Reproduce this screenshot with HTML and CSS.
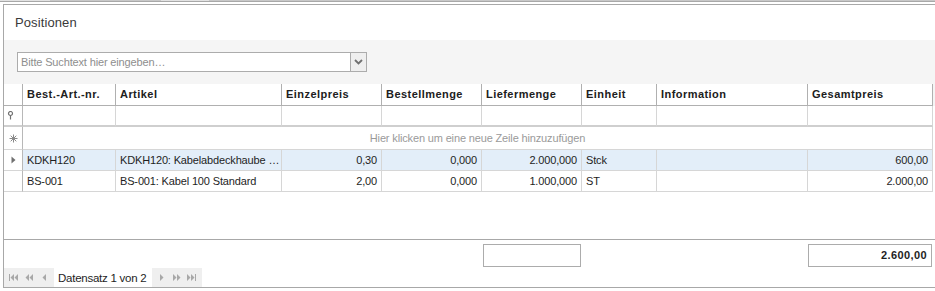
FILE: index.html
```html
<!DOCTYPE html>
<html lang="de">
<head>
    <meta charset="UTF-8">
    <title>Positionen</title>
    <link rel="stylesheet" href="styles.css">
</head>
<body>

<!-- Reste der Tab-Leiste -->
<div class="tabs">
    <span class="tab tab-a"></span>
    <span class="tab tab-b"></span>
</div>

<section class="panel">
    <div class="panel-title">Positionen</div>

    <div class="search-bar">
        <div class="combo">
            <span class="placeholder">Bitte Suchtext hier eingeben…</span>
            <span class="combo-btn">
                <svg width="9" height="6" viewBox="0 0 9 6"><path d="M1 1 L4.5 4.5 L8 1" fill="none" stroke="#707070" stroke-width="1.8"/></svg>
            </span>
        </div>
    </div>

    <div class="grid">
        <div class="row head">
            <div class="cell ind"></div>
            <div class="cell">Best.-Art.-nr.</div>
            <div class="cell">Artikel</div>
            <div class="cell">Einzelpreis</div>
            <div class="cell">Bestellmenge</div>
            <div class="cell">Liefermenge</div>
            <div class="cell">Einheit</div>
            <div class="cell">Information</div>
            <div class="cell">Gesamtpreis</div>
        </div>

        <div class="row filter">
            <div class="cell ind">
                <svg width="7" height="9" viewBox="0 0 7 9"><circle cx="3.5" cy="2.5" r="2" fill="none" stroke="#707070" stroke-width="1.2"/><path d="M3.5 4.5 V8.5" stroke="#707070" stroke-width="1.2"/></svg>
            </div>
            <div class="cell"></div>
            <div class="cell"></div>
            <div class="cell"></div>
            <div class="cell"></div>
            <div class="cell"></div>
            <div class="cell"></div>
            <div class="cell"></div>
            <div class="cell"></div>
        </div>

        <div class="row new-row">
            <div class="cell ind">
                <svg width="9" height="9" viewBox="0 0 9 9"><path d="M4.5 0.5 V8.5 M0.5 4.5 H8.5 M1.7 1.7 L7.3 7.3 M7.3 1.7 L1.7 7.3" stroke="#8a8a8a" stroke-width="1"/></svg>
            </div>
            <div class="cell hint">Hier klicken um eine neue Zeile hinzuzufügen</div>
        </div>

        <div class="row data selected">
            <div class="cell ind">
                <svg width="5" height="8" viewBox="0 0 5 8"><path d="M0.5 0.5 L4.5 4 L0.5 7.5 Z" fill="#707070"/></svg>
            </div>
            <div class="cell">KDKH120</div>
            <div class="cell">KDKH120: Kabelabdeckhaube …</div>
            <div class="cell num">0,30</div>
            <div class="cell num">0,000</div>
            <div class="cell num">2.000,000</div>
            <div class="cell">Stck</div>
            <div class="cell"></div>
            <div class="cell num">600,00</div>
        </div>

        <div class="row data">
            <div class="cell ind"></div>
            <div class="cell">BS-001</div>
            <div class="cell">BS-001: Kabel 100 Standard</div>
            <div class="cell num">2,00</div>
            <div class="cell num">0,000</div>
            <div class="cell num">1.000,000</div>
            <div class="cell">ST</div>
            <div class="cell"></div>
            <div class="cell num">2.000,00</div>
        </div>
    </div>

    <div class="footer">
        <div class="sum-row">
            <div class="sum-slot slot-liefer"><div class="sum-box"></div></div>
            <div class="sum-slot slot-total"><div class="sum-box total">2.600,00</div></div>
        </div>

        <div class="navigator">
            <div class="nav-group">
                <span class="nav-btn"><svg width="9" height="7" viewBox="0 0 9 7"><path d="M0.5 0 V7" stroke="#a8a8a8"/><path d="M5 0 L1.5 3.5 L5 7 Z M9 0 L5.5 3.5 L9 7 Z" fill="#a8a8a8"/></svg></span>
                <span class="nav-btn"><svg width="8" height="7" viewBox="0 0 8 7"><path d="M4 0 L0.5 3.5 L4 7 Z M8 0 L4.5 3.5 L8 7 Z" fill="#a8a8a8"/></svg></span>
                <span class="nav-btn"><svg width="4" height="7" viewBox="0 0 4 7"><path d="M4 0 L0.5 3.5 L4 7 Z" fill="#a8a8a8"/></svg></span>
            </div>
            <div class="nav-text">Datensatz 1 von 2</div>
            <div class="nav-group">
                <span class="nav-btn"><svg width="4" height="7" viewBox="0 0 4 7"><path d="M0 0 L3.5 3.5 L0 7 Z" fill="#a8a8a8"/></svg></span>
                <span class="nav-btn"><svg width="8" height="7" viewBox="0 0 8 7"><path d="M0 0 L3.5 3.5 L0 7 Z M4 0 L7.5 3.5 L4 7 Z" fill="#a8a8a8"/></svg></span>
                <span class="nav-btn"><svg width="9" height="7" viewBox="0 0 9 7"><path d="M0 0 L3.5 3.5 L0 7 Z M4 0 L7.5 3.5 L4 7 Z" fill="#a8a8a8"/><path d="M8.5 0 V7" stroke="#a8a8a8"/></svg></span>
            </div>
        </div>
    </div>
</section>

</body>
</html>
```

FILE: styles.css
```css
/* Styles */
:root {
    --cols: 19px 93px 166px 100px 100px 100px 75px 151px 125px;
}

body {
    margin: 0;
    padding: 0;
    font-family: "Liberation Sans", Arial, sans-serif;
    font-size: 11px;
    color: #1e1e1e;
    background-color: #fff;
    overflow: hidden;
}

/* Tab-Leiste oben */
.tabs {
    position: relative;
    height: 1px;
    background-color: #c8c8c8;
    border-bottom: 1px solid #a8a8a8;
    margin-bottom: 2px;
}

.tab {
    position: absolute;
    top: 0;
    height: 1px;
    background-color: #e2e2e2;
}

.tab-a { left: 0; width: 50px; }
.tab-b { left: 161px; width: 48px; }

.panel {
    margin-left: 3px;
    border-top: 1px solid #a8a8a8;
    border-left: 1px solid #a8a8a8;
    border-bottom: 1px solid #a8a8a8;
}

.panel-title {
    height: 35px;
    line-height: 35px;
    padding-left: 11px;
    font-size: 13px;
    letter-spacing: 0.1px;
    color: #3a3a3a;
}

.search-bar {
    height: 44px;
    box-sizing: border-box;
    padding: 12px 0 0 13px;
    background-color: #f5f5f5;
}

.combo {
    display: flex;
    width: 350px;
    height: 20px;
    box-sizing: border-box;
    border: 1px solid #acacac;
    background-color: #fff;
}

.placeholder {
    flex: 1;
    padding-left: 3px;
    line-height: 18px;
    color: #8e8e8e;
    letter-spacing: -0.15px;
}

.combo-btn {
    width: 15px;
    display: flex;
    align-items: center;
    justify-content: center;
    border-left: 1px solid #acacac;
    background-color: #efefef;
}

/* Tabelle */
.grid {
    height: 155px;
}

.row {
    display: grid;
    grid-template-columns: var(--cols);
}

.cell {
    box-sizing: border-box;
    border-right: 1px solid #d6d6d6;
    padding: 0 4px;
    white-space: nowrap;
    overflow: hidden;
    background-color: #fff;
    letter-spacing: -0.15px;
}

.cell.ind {
    padding: 0;
    display: flex;
    align-items: center;
    justify-content: center;
    border-right-color: #b8b8b8;
}

.cell.num {
    text-align: right;
}

.head {
    background-color: #f5f5f5;
}

.head .cell {
    height: 22px;
    line-height: 21px;
    border-right-color: #b0b0b0;
    border-bottom: 1px solid #b0b0b0;
    font-weight: bold;
    letter-spacing: 0.45px;
    color: #202020;
}

.filter .cell {
    height: 21px;
    border-bottom: 2px solid #cfcfcf;
}

.filter .cell.ind {
    justify-content: flex-start;
    padding-left: 3px;
}

.new-row {
    grid-template-columns: 19px 910px;
}

.new-row .cell {
    height: 23px;
    line-height: 22px;
    border-bottom: 1px solid #d6d6d6;
}

.new-row .cell.hint {
    border-right: 1px solid #d6d6d6;
    text-align: center;
    color: #9a9a9a;
}

.data .cell {
    height: 21px;
    line-height: 20px;
    border-bottom: 1px solid #d6d6d6;
}

.selected .cell {
    background-color: #e3eef9;
}

.selected .cell.ind {
    background-color: #fff;
}

/* Fuss mit Summen */
.footer {
    border-top: 1px solid #a8a8a8;
}

.sum-row {
    display: grid;
    grid-template-columns: var(--cols);
    padding-top: 4px;
    height: 23px;
}

.slot-liefer {
    grid-column: 6;
    padding-left: 1px;
}

.slot-total {
    grid-column: 9;
}

.sum-box {
    box-sizing: border-box;
    height: 23px;
    line-height: 21px;
    border: 1px solid #acacac;
    padding-right: 4px;
    text-align: right;
}

.slot-liefer .sum-box {
    width: 98px;
}

.slot-total .sum-box {
    width: 124px;
}

.sum-box.total {
    font-weight: bold;
    letter-spacing: 0.4px;
}

.navigator {
    display: flex;
    height: 19px;
    margin-top: 1px;
}

.nav-group {
    display: flex;
    align-items: center;
    gap: 6px;
    padding: 0 6px 0 5px;
    background-color: #efefef;
}

.nav-btn {
    display: flex;
    width: 9px;
    justify-content: center;
}

.nav-text {
    display: flex;
    align-items: center;
    padding: 0 6px 0 4px;
    font-size: 11.5px;
    letter-spacing: -0.25px;
    color: #1e1e1e;
}
```
